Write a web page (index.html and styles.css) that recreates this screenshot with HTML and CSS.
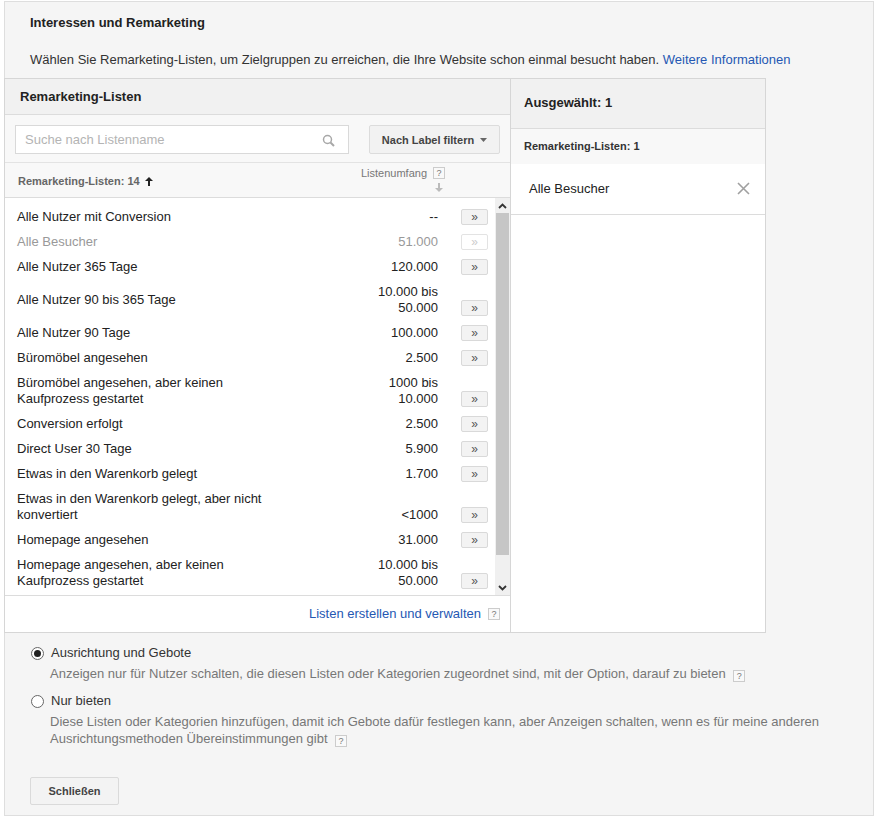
FILE: index.html
```html
<!DOCTYPE html>
<html lang="de">
<head>
<meta charset="utf-8">
<title>Interessen und Remarketing</title>
<link rel="stylesheet" href="styles.css">
</head>
<body>
<div class="dialog">
  <div class="title">Interessen und Remarketing</div>
  <div class="intro">Wählen Sie Remarketing-Listen, um Zielgruppen zu erreichen, die Ihre Website schon einmal besucht haben. <a class="link" href="#">Weitere Informationen</a></div>

  <div class="panel">
    <div class="left">
      <div class="pane-head">Remarketing-Listen</div>
      <div class="search-row">
        <div class="search">
          <span class="placeholder">Suche nach Listenname</span>
          <svg class="mag" width="13" height="13" viewBox="0 0 13 13"><circle cx="5.5" cy="5.5" r="4" fill="none" stroke="#a8a8a8" stroke-width="1.5"/><line x1="8.5" y1="8.5" x2="12" y2="12" stroke="#a8a8a8" stroke-width="2"/></svg>
        </div>
        <div class="filter">Nach Label filtern <svg width="7" height="4" viewBox="0 0 7 4"><polygon points="0,0 7,0 3.5,4" fill="#666"/></svg></div>
      </div>
      <div class="thead">
        <div class="th-name">Remarketing-Listen: 14 <svg class="sort" width="8" height="9" viewBox="0 0 8 9"><path d="M4 0 L8 4 H5 V9 H3 V4 H0 Z" fill="#222"/></svg></div>
        <div class="th-size">
          <div class="th-size-top">Listenumfang <span class="help">?</span></div>
          <svg class="th-arrow" width="8" height="9" viewBox="0 0 8 9"><path d="M4 9 L8 5 H5 V0 H3 V5 H0 Z" fill="#bbb"/></svg>
        </div>
      </div>
      <div class="list">
        <div class="rows">
          <div class="row"><div class="name">Alle Nutzer mit Conversion</div><div class="val">--</div><span class="add">»</span></div>
          <div class="row off"><div class="name">Alle Besucher</div><div class="val">51.000</div><span class="add">»</span></div>
          <div class="row"><div class="name">Alle Nutzer 365 Tage</div><div class="val">120.000</div><span class="add">»</span></div>
          <div class="row"><div class="name">Alle Nutzer 90 bis 365 Tage</div><div class="val">10.000 bis<br>50.000</div><span class="add">»</span></div>
          <div class="row"><div class="name">Alle Nutzer 90 Tage</div><div class="val">100.000</div><span class="add">»</span></div>
          <div class="row"><div class="name">Büromöbel angesehen</div><div class="val">2.500</div><span class="add">»</span></div>
          <div class="row"><div class="name">Büromöbel angesehen, aber keinen<br>Kaufprozess gestartet</div><div class="val">1000 bis<br>10.000</div><span class="add">»</span></div>
          <div class="row"><div class="name">Conversion erfolgt</div><div class="val">2.500</div><span class="add">»</span></div>
          <div class="row"><div class="name">Direct User 30 Tage</div><div class="val">5.900</div><span class="add">»</span></div>
          <div class="row"><div class="name">Etwas in den Warenkorb gelegt</div><div class="val">1.700</div><span class="add">»</span></div>
          <div class="row"><div class="name">Etwas in den Warenkorb gelegt, aber nicht<br>konvertiert</div><div class="val">&lt;1000</div><span class="add">»</span></div>
          <div class="row"><div class="name">Homepage angesehen</div><div class="val">31.000</div><span class="add">»</span></div>
          <div class="row"><div class="name">Homepage angesehen, aber keinen<br>Kaufprozess gestartet</div><div class="val">10.000 bis<br>50.000</div><span class="add">»</span></div>
        </div>
        <div class="scrollbar">
          <div class="sb-btn"><svg width="9" height="6" viewBox="0 0 9 6"><polyline points="1,5 4.5,1.5 8,5" fill="none" stroke="#333" stroke-width="1.8"/></svg></div>
          <div class="sb-track"><div class="sb-thumb"></div></div>
          <div class="sb-btn"><svg width="9" height="6" viewBox="0 0 9 6"><polyline points="1,1 4.5,4.5 8,1" fill="none" stroke="#333" stroke-width="1.8"/></svg></div>
        </div>
      </div>
      <div class="foot"><a class="link" href="#">Listen erstellen und verwalten</a> <span class="help">?</span></div>
    </div>
    <div class="right">
      <div class="sel-head">Ausgewählt: 1</div>
      <div class="sel-sub">Remarketing-Listen: 1</div>
      <div class="sel-item">
        <span>Alle Besucher</span>
        <svg width="13" height="13" viewBox="0 0 13 13"><path d="M1 1 L12 12 M12 1 L1 12" stroke="#a0a0a0" stroke-width="1.6"/></svg>
      </div>
    </div>
  </div>

  <div class="options">
    <div class="opt">
      <div class="opt-label"><span class="radio on"></span>Ausrichtung und Gebote</div>
      <div class="opt-desc">Anzeigen nur für Nutzer schalten, die diesen Listen oder Kategorien zugeordnet sind, mit der Option, darauf zu bieten <span class="help">?</span></div>
    </div>
    <div class="opt">
      <div class="opt-label"><span class="radio"></span>Nur bieten</div>
      <div class="opt-desc two">Diese Listen oder Kategorien hinzufügen, damit ich Gebote dafür festlegen kann, aber Anzeigen schalten, wenn es für meine anderen<br>Ausrichtungsmethoden Übereinstimmungen gibt <span class="help">?</span></div>
    </div>
  </div>
  <div class="actions"><span class="btn">Schließen</span></div>
</div>
</body>
</html>
```

FILE: styles.css
```css
* { box-sizing: border-box; }
html, body { margin: 0; padding: 0; background: #fff; }
body { font-family: "Liberation Sans", Arial, sans-serif; font-size: 13px; line-height: 16px; color: #222; }

.dialog {
  margin: 1px 0 0 4px;
  width: 870px;
  height: 815px;
  border: 1px solid #dedede;
  background: #f5f5f5;
}
.title { font-weight: bold; padding: 13px 0 0 25px; color: #222; }
.intro { padding: 21px 0 0 25px; color: #333; margin-bottom: 10px; }
.link { color: #2558b3; text-decoration: none; }

.panel {
  margin-left: -1px;
  width: 762px;
  height: 555px;
  border: 1px solid #d6d6d6;
  background: #fff;
  display: flex;
}
.left { width: 506px; border-right: 1px solid #d6d6d6; display: flex; flex-direction: column; }
.pane-head {
  height: 36px; padding: 10px 0 0 15px;
  background: #f1f1f1; border-bottom: 1px solid #dcdcdc;
  font-weight: bold;
}
.search-row {
  height: 48px; padding: 10px 10px 0 10px;
  background: #f8f8f8; border-bottom: 1px solid #e3e3e3;
  display: flex; gap: 20px;
}
.search {
  width: 334px; height: 29px;
  background: #fff; border: 1px solid #d9d9d9;
  display: flex; align-items: center; justify-content: space-between;
  padding: 0 13px 0 9px;
}
.placeholder { color: #b4b4b4; }
.mag { margin-top: 1px; }
.filter {
  width: 131px; height: 29px;
  background: #f2f2f2; border: 1px solid #dcdcdc; border-radius: 2px;
  font-size: 11px; font-weight: bold; color: #444;
  display: flex; align-items: center; justify-content: center; gap: 6px;
}
.thead {
  height: 35px; background: #f8f8f8; border-bottom: 1px solid #dcdcdc;
  display: flex; justify-content: space-between;
  padding: 2px 65px 0 13px;
}
.th-name { font-size: 11px; font-weight: bold; color: #666; align-self: center; display: flex; align-items: center; gap: 5px; margin-top: 0; }
.th-size { display: flex; flex-direction: column; align-items: flex-end; padding-top: 1px; }
.th-size-top { font-size: 11px; color: #777; display: flex; align-items: center; gap: 6px; line-height: 14px; }
.th-arrow { margin: 3px 2px 0 0; }

.help {
  display: inline-flex; align-items: center; justify-content: center;
  width: 12px; height: 12px;
  border: 1px solid #ccc; background: #f9f9f9;
  font-size: 9px; line-height: 10px; color: #777;
  vertical-align: -1px;
}
.opt-desc .help { margin-left: 4px; }

.list { height: 397px; display: flex; }
.rows { flex: 1; overflow: hidden; padding: 7px 7px 0 12px; }
.row { display: flex; align-items: center; padding: 4px 0 5px; }
.name { flex: 1; white-space: nowrap; }
.val { width: 120px; text-align: right; align-self: flex-end; white-space: nowrap; }
.add {
  align-self: flex-end;
  margin-left: 23px;
  width: 27px; height: 16px;
  border: 1px solid #d9d9d9; border-radius: 2px; background: #f3f3f3;
  font-size: 12px; line-height: 14px; text-align: center; color: #555;
}
.row.off .name, .row.off .val { color: #999; }
.row.off .add { background: #fff; color: #ccc; border-color: #e3e3e3; }

.scrollbar { width: 15px; background: #f0f0f0; display: flex; flex-direction: column; }
.sb-btn { height: 15px; display: flex; align-items: center; justify-content: center; }
.sb-track { flex: 1; padding: 0 1px; }
.sb-thumb { height: 342px; background: #c6c6c6; }

.foot {
  height: 36px; border-top: 1px solid #dcdcdc;
  display: flex; align-items: center; justify-content: flex-end; gap: 7px;
  padding: 0 10px 0 0;
}

.right { flex: 1; display: flex; flex-direction: column; }
.sel-head {
  height: 50px; padding: 16px 0 0 13px;
  background: #f1f1f1; border-bottom: 1px solid #dcdcdc;
  font-weight: bold;
}
.sel-sub {
  height: 35px; padding: 9px 0 0 13px;
  background: #f8f8f8; font-size: 11px; font-weight: bold; color: #333;
}
.sel-item {
  height: 51px; border-bottom: 1px solid #dcdcdc;
  display: flex; align-items: center; justify-content: space-between;
  padding: 0 15px 1px 18px;
}

.options { padding: 12px 0 0 26px; }
.opt + .opt { margin-top: 11px; }
.opt-label { display: flex; align-items: center; gap: 7px; color: #333; }
.radio {
  width: 13px; height: 13px; border-radius: 50%;
  border: 1px solid #666; background: #fff;
  display: inline-flex; align-items: center; justify-content: center;
}
.radio.on::after { content: ""; width: 7px; height: 7px; border-radius: 50%; background: #222; }
.opt-desc { margin: 5px 0 0 19px; color: #777; }
.opt-desc.two { margin-top: 4px; line-height: 17px; }
.actions { padding: 30px 0 0 25px; }
.btn {
  display: inline-flex; align-items: center; justify-content: center;
  width: 89px; height: 28px;
  border: 1px solid #dadada; border-radius: 2px; background: #f3f3f3;
  font-size: 11px; font-weight: bold; color: #444;
}
```
